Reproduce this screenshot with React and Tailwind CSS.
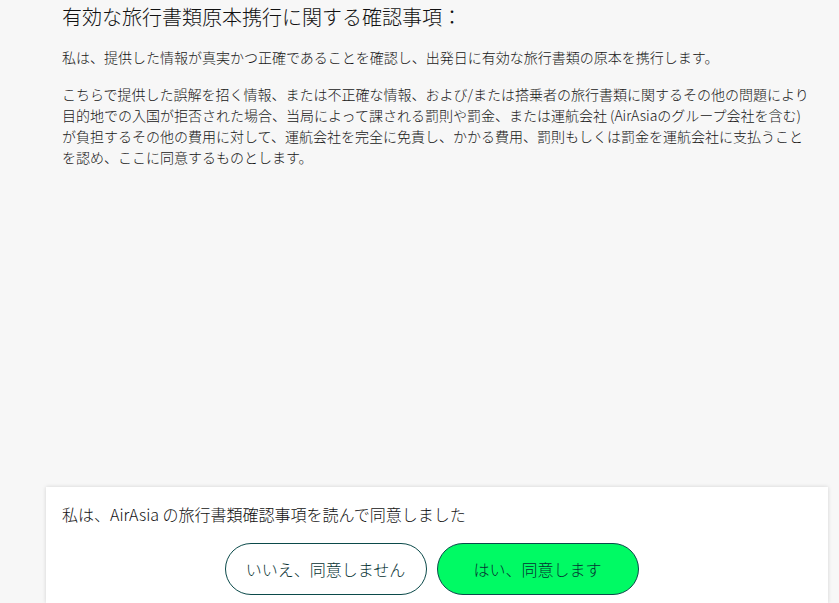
export default function App() {
  const font = { fontFamily: '"Noto Sans CJK JP", "Noto Sans", sans-serif' };
  return (
    <div className="h-[603px] w-full bg-[#f7f7f7] flex flex-col overflow-hidden text-[#161616] font-light" style={font}>
      <div className="pl-[62px] pt-[3px]">
        <h1 className="text-[20px] leading-[28px] font-light text-[#111]">有効な旅行書類原本携行に関する確認事項：</h1>
        <div className="w-[752px] text-[14px] leading-[21px] mt-[16px]">
          <p>私は、提供した情報が真実かつ正確であることを確認し、出発日に有効な旅行書類の原本を携行します。</p>
          <p className="mt-[16px]">
            こちらで提供した誤解を招く情報、または不正確な情報、および/または搭乗者の旅行書類に関するその他の問題により目的地での入国が拒否された場合、当局によって課される罰則や罰金、または運航会社 (AirAsiaのグループ会社を含む)が負担するその他の費用に対して、運航会社を完全に免責し、かかる費用、罰則もしくは罰金を運航会社に支払うことを認め、ここに同意するものとします。
          </p>
        </div>
      </div>
      <div className="mt-auto ml-[46px] w-[782px] bg-white shadow-[0_0_4px_rgba(0,0,0,0.15)] pt-[15px] pb-[8px] px-[16px]">
        <p className="text-[16px] leading-[24px] text-[#111]">私は、AirAsia の旅行書類確認事項を読んで同意しました</p>
        <div className="flex justify-center gap-[10px] mt-[17px] pr-[11px]">
          <button className="w-[202px] h-[52px] rounded-full border border-[#0b4a4a] bg-white text-[16px] font-light text-[#063232]">いいえ、同意しません</button>
          <button className="w-[202px] h-[52px] rounded-full border border-[#0b4a4a] bg-[#00fa64] text-[16px] font-light text-[#063232]">はい、同意します</button>
        </div>
      </div>
    </div>
  );
}
